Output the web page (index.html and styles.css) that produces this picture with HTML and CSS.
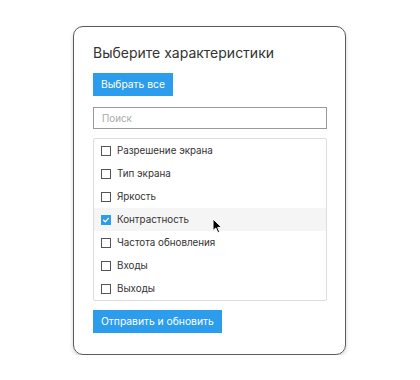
FILE: index.html
```html
<!DOCTYPE html>
<html lang="ru">
<head>
    <meta charset="UTF-8">
    <meta name="viewport" content="width=device-width, initial-scale=1.0">
    <title>Выберите характеристики</title>
    <link rel="stylesheet" href="styles.css">
</head>
<body>
    <div class="picker-card">
        <h1 class="picker-title">Выберите характеристики</h1>

        <button type="button" class="btn">Выбрать все</button>

        <input type="text" class="search-input" placeholder="Поиск">

        <ul class="option-list">
            <li class="option"><span class="box"></span>Разрешение экрана</li>
            <li class="option"><span class="box"></span>Тип экрана</li>
            <li class="option"><span class="box"></span>Яркость</li>
            <li class="option hover">
                <span class="box checked">
                    <svg width="10" height="10" viewBox="0 0 10 10"><path d="M2.6 5.2 L4.3 6.8 L7.4 3.4" fill="none" stroke="#fff" stroke-width="1.3" stroke-linecap="round" stroke-linejoin="round"/></svg>
                </span>Контрастность
                <svg class="cursor" width="12" height="16" viewBox="0 0 12 16">
                    <path d="M1 1 L1 12.5 L3.8 10 L5.8 14.6 L7.6 13.8 L5.7 9.4 L9.6 9.4 Z" fill="#000" stroke="#fff" stroke-width="1" stroke-linejoin="round"/>
                </svg>
            </li>
            <li class="option"><span class="box"></span>Частота обновления</li>
            <li class="option"><span class="box"></span>Входы</li>
            <li class="option"><span class="box"></span>Выходы</li>
        </ul>

        <button type="button" class="btn">Отправить и обновить</button>
    </div>
</body>
</html>
```

FILE: styles.css
```css
* {
    margin: 0;
    padding: 0;
    box-sizing: border-box;
    font-family: Inter, 'Noto Sans', sans-serif;
}

body {
    background-color: #fff;
    padding: 26px 0 0 73px;
}

.picker-card {
    width: 273px;
    height: 329px;
    border: 1px solid #5a5a5a;
    border-radius: 10px;
    box-shadow: 0 2px 4px rgba(0, 0, 0, 0.18);
    padding: 16px 18px 0 19px;
    display: flex;
    flex-direction: column;
    align-items: flex-start;
}

.picker-title {
    font-size: 14px;
    font-weight: 400;
    line-height: 20px;
    color: #333;
    margin-bottom: 10px;
}

.btn {
    background-color: #2c9ced;
    color: #fff;
    border: none;
    font-size: 10.3px;
    line-height: 23px;
    height: 23px;
    padding: 0 8px;
    cursor: pointer;
}

.search-input {
    width: 100%;
    height: 22px;
    margin-top: 11px;
    border: 1px solid #999;
    padding: 0 8px;
    font-size: 9.8px;
    color: #333;
}

.search-input::placeholder {
    color: #aaa;
}

.search-input:focus {
    outline: none;
}

.option-list {
    list-style: none;
    width: 100%;
    margin: 9px 0;
    border: 1px solid #ddd;
    border-radius: 2px;
}

.option {
    position: relative;
    display: flex;
    align-items: center;
    height: 23px;
    padding-left: 7px;
    font-size: 9.8px;
    color: #333;
}

.option.hover {
    background-color: #f5f5f5;
}

.box {
    width: 10px;
    height: 10px;
    border: 1px solid #555;
    margin-right: 6px;
    flex-shrink: 0;
    display: flex;
}

.box.checked {
    background-color: #2c9ced;
    border-color: #2c9ced;
}

.box svg {
    margin: -1px;
}

.cursor {
    position: absolute;
    left: 118px;
    top: 10px;
}
```
